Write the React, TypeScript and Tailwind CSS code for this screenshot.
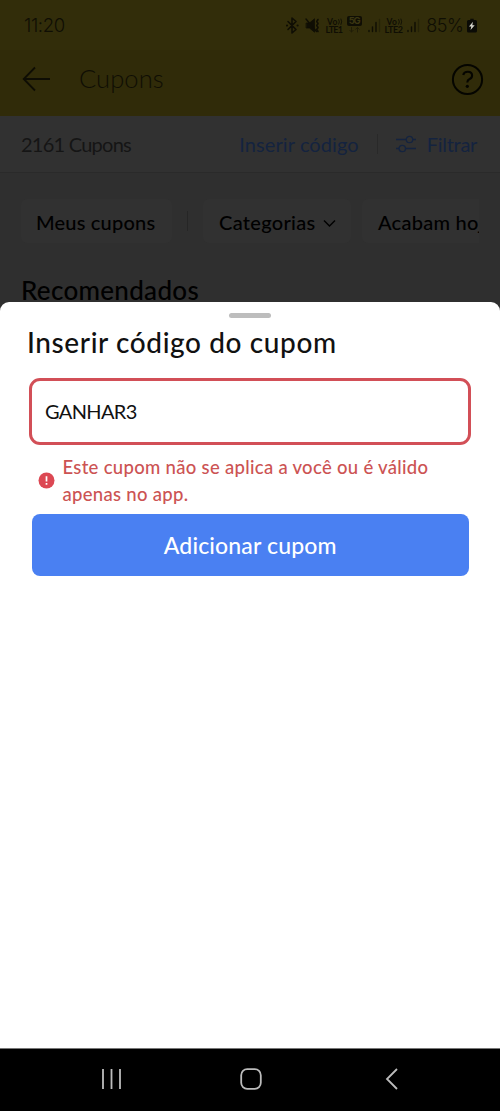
import React from "react";

function StatusIcons() {
  return (
    <svg width="214" height="26" viewBox="286 12 214 26" className="block shrink-0" fill="none" stroke="#0f0e04" strokeLinecap="round" strokeLinejoin="round">
      <path d="M288 21.5l8 8-4 3.5V18l4 3.5-8 8" strokeWidth="1.6" />
      <circle cx="287" cy="25.5" r="1.1" fill="#0f0e04" stroke="none" />
      <circle cx="297.6" cy="25.5" r="1.1" fill="#0f0e04" stroke="none" />
      <path d="M306.5 23h3l5-4.2v13.4l-5-4.2h-3z" fill="#0f0e04" strokeWidth=".8" />
      <path d="M306 19l10.5 12.5" strokeWidth="1.4" />
      <path d="M318 19.5l-1.2 2 1.2 2-1.2 2 1.2 2-1.2 2 1.2 2" strokeWidth="1.6" />
      <g fill="#0f0e04" stroke="none" fontFamily="Lato, sans-serif" fontWeight="700">
        <text x="327" y="24.5" fontSize="8.5" textLength="10.5">Vo</text>
        <text x="325.5" y="32.5" fontSize="9" textLength="17.5">LTE1</text>
        <text x="386.5" y="24.5" fontSize="8.5" textLength="10.5">Vo</text>
        <text x="384.5" y="32.5" fontSize="9" textLength="18.5">LTE2</text>
      </g>
      <path d="M338.7 19.5q1.5 2.3 0 4.7M341 19q1.5 2.8 0 5.5M398.7 19.5q1.5 2.3 0 4.7M401 19q1.5 2.8 0 5.5" strokeWidth=".9" />
      <rect x="347" y="16" width="15" height="10" rx="2" fill="#0f0e04" stroke="none" />
      <text x="348.7" y="24.4" fontSize="9.5" fontFamily="Inter, sans-serif" fontWeight="700" textLength="12" fill="#3b3611" stroke="none">5G</text>
      <path d="M351.5 27.5v4.5m-1.7-1.7l1.7 1.7 1.7-1.7M357.5 32v-4.5m-1.7 1.7l1.7-1.7 1.7 1.7" stroke="#201d07" strokeWidth="1" />
      <path d="M369 30.5v1M372.5 27v4.5M376 22.5v9M408 30.5v1M411.5 27v4.5M415 22.5v9" strokeWidth="1.4" />
      <path d="M379.5 19.5v12M418.5 19.5v12" stroke="#252207" strokeWidth="1.3" />
      <text x="426.3" y="32" fontSize="18" fontFamily="Inter, sans-serif" fontWeight="300" textLength="37.5" fill="#0f0e04" stroke="none">85%</text>
      <path d="M470.3 18.8h3.4v1.2h1.8q1.5 0 1.5 1.5v9.5q0 1.5-1.5 1.5h-7q-1.5 0-1.5-1.5v-9.5q0-1.5 1.5-1.5h1.8z" fill="#0b0b06" stroke="none" />
      <path d="M473 21.8l-4 4.7h2.3l-.8 3.5 4.2-4.8h-2.4z" fill="#d5d5cd" stroke="none" />
    </svg>
  );
}

export default function App() {
  return (
    <div className="flex h-[1111px] w-[500px] flex-col overflow-hidden bg-[#2f2f2f] font-['Lato',sans-serif] text-black">
      <header className="h-[116px] shrink-0 bg-[#302b09]">
        <div className="flex h-[50px] items-start justify-between bg-[#322d0a] pt-3 pl-6">
          <span className="font-['Inter',sans-serif] text-[18.5px] leading-[27px] font-light tracking-[-0.35px] text-[#0f0e04]">11:20</span>
          <StatusIcons />
        </div>
        <div className="flex h-[58px] items-center pl-[22px]">
          <svg width="30" height="26" viewBox="0 0 30 26" fill="none" stroke="#0e0d04" strokeWidth="1.8">
            <path d="M13 1.5L1.7 13 13 24.5M1.7 13H28" />
          </svg>
          <h1 className="-mt-0.5 ml-[27px] text-[25.5px] leading-8 font-light tracking-[0.1px] text-[#0f0e04]">Cupons</h1>
          <svg className="mr-4 ml-auto" width="33" height="33" viewBox="0 0 33 33" fill="none" stroke="#050500">
            <circle cx="16.5" cy="16.5" r="14.6" strokeWidth="2" />
            <path d="M12.2 12q.8-3.3 4.6-3.3 4.3 0 4.3 3.7 0 2.4-2.5 3.6-2.3 1.1-2.3 3.4" strokeWidth="2.1" />
            <circle cx="16.3" cy="23.3" r="1.6" fill="#050500" stroke="none" />
          </svg>
        </div>
      </header>

      <div className="flex h-[57px] shrink-0 items-center border-b border-[#2a2a2a] bg-[#313131] pl-[21px] text-[20px]">
        <span className="tracking-[-0.75px] text-[#151515]">2161 Cupons</span>
        <span className="ml-auto tracking-[0.1px] text-[#14233f]">Inserir código</span>
        <span className="ml-[18px] h-5 w-px bg-[#292929]" />
        <svg className="-mt-px ml-[17px]" width="22" height="20" viewBox="0 0 22 20" fill="none" stroke="#14233f" strokeWidth="1.3">
          <path d="M1 5.5h10M18 5.5h3M1 14.5h3M11 14.5h10" />
          <circle cx="14.5" cy="5.5" r="3.2" />
          <circle cx="7.3" cy="14.5" r="3.2" />
        </svg>
        <span className="mr-[23px] ml-[10px] tracking-[-0.3px] text-[#14233f]">Filtrar</span>
      </div>

      <main className="h-[129px] shrink-0 pt-[26px] pl-[21px]">
        <div className="flex h-11 w-[458px] items-center overflow-hidden text-[20px] font-medium whitespace-nowrap">
          <span className="flex h-11 w-[151px] shrink-0 items-center rounded-md bg-[#313131] pt-px pl-[15px] tracking-[0.2px]">Meus cupons</span>
          <span className="mr-[15px] ml-[15px] h-5 w-px shrink-0 bg-[#262626]" />
          <span className="flex h-11 w-[148px] shrink-0 items-center rounded-md bg-[#313131] pt-px pl-4 tracking-[0.3px]">
            Categorias
            <svg className="mt-1 ml-[7px]" width="13" height="9" viewBox="0 0 13 9" fill="none" stroke="black" strokeWidth="1.5">
              <path d="M1 1.5l5.5 5.5L12 1.5" />
            </svg>
          </span>
          <span className="ml-[11px] flex h-11 w-[150px] shrink-0 items-center rounded-md bg-[#313131] pt-px pl-4 tracking-[0.25px]">Acabam hoje</span>
        </div>
        <h2 className="mt-[31px] text-[26px] leading-8 font-medium tracking-[0.3px]">Recomendados</h2>
      </main>

      <section className="z-10 flex grow flex-col rounded-t-[9px] bg-white pt-[11px]">
        <div className="mx-auto h-[5px] w-[42px] rounded-full bg-[#bdbdbd]" />
        <h2 className="mt-[6px] ml-[27px] text-[28px] leading-9 font-medium tracking-[0.6px] text-[#111]">Inserir código do cupom</h2>
        <div className="mx-[29px] mt-[18px] flex h-[67px] items-center rounded-[11px] border-3 border-[#d24f57] pb-0.5 pl-[13px] text-[20px] tracking-[-0.65px] text-[#111]">
          GANHAR3
        </div>
        <div className="mt-[9px] ml-[38px] flex items-center text-[18.5px] leading-[26.7px] font-medium tracking-[0.3px] text-[#cc5353]">
          <svg className="mr-[7.5px] shrink-0" width="17" height="17" viewBox="0 0 17 17">
            <circle cx="8.5" cy="8.5" r="8" fill="#dc4853" />
            <path d="M8.5 4.2v5.2M8.5 11v1.8" stroke="#fff" strokeWidth="1.7" />
          </svg>
          <p>Este cupom não se aplica a você ou é válido<br />apenas no app.</p>
        </div>
        <button className="mr-[31px] ml-[31.5px] mt-[7px] h-[62px] rounded-lg bg-[#4a80f2] text-[23px] font-medium tracking-[0.15px] text-white">Adicionar cupom</button>
      </section>

      <nav className="flex h-[63px] shrink-0 items-center border-t border-[#777] bg-black pb-0.5 pl-[101px]">
        <svg width="21" height="22" viewBox="0 0 21 22" stroke="#bcbcbc" strokeWidth="1.8">
          <path d="M2 1v20M10.5 1v20M19 1v20" />
        </svg>
        <svg className="ml-[118px]" width="22" height="22" viewBox="0 0 22 22" fill="none" stroke="#bcbcbc" strokeWidth="1.8">
          <rect x="1.2" y="1.2" width="19.6" height="19.6" rx="6" />
        </svg>
        <svg className="ml-[123px]" width="13" height="22" viewBox="0 0 13 22" fill="none" stroke="#bcbcbc" strokeWidth="1.8">
          <path d="M12 1L2 11l10 10" />
        </svg>
      </nav>
    </div>
  );
}
